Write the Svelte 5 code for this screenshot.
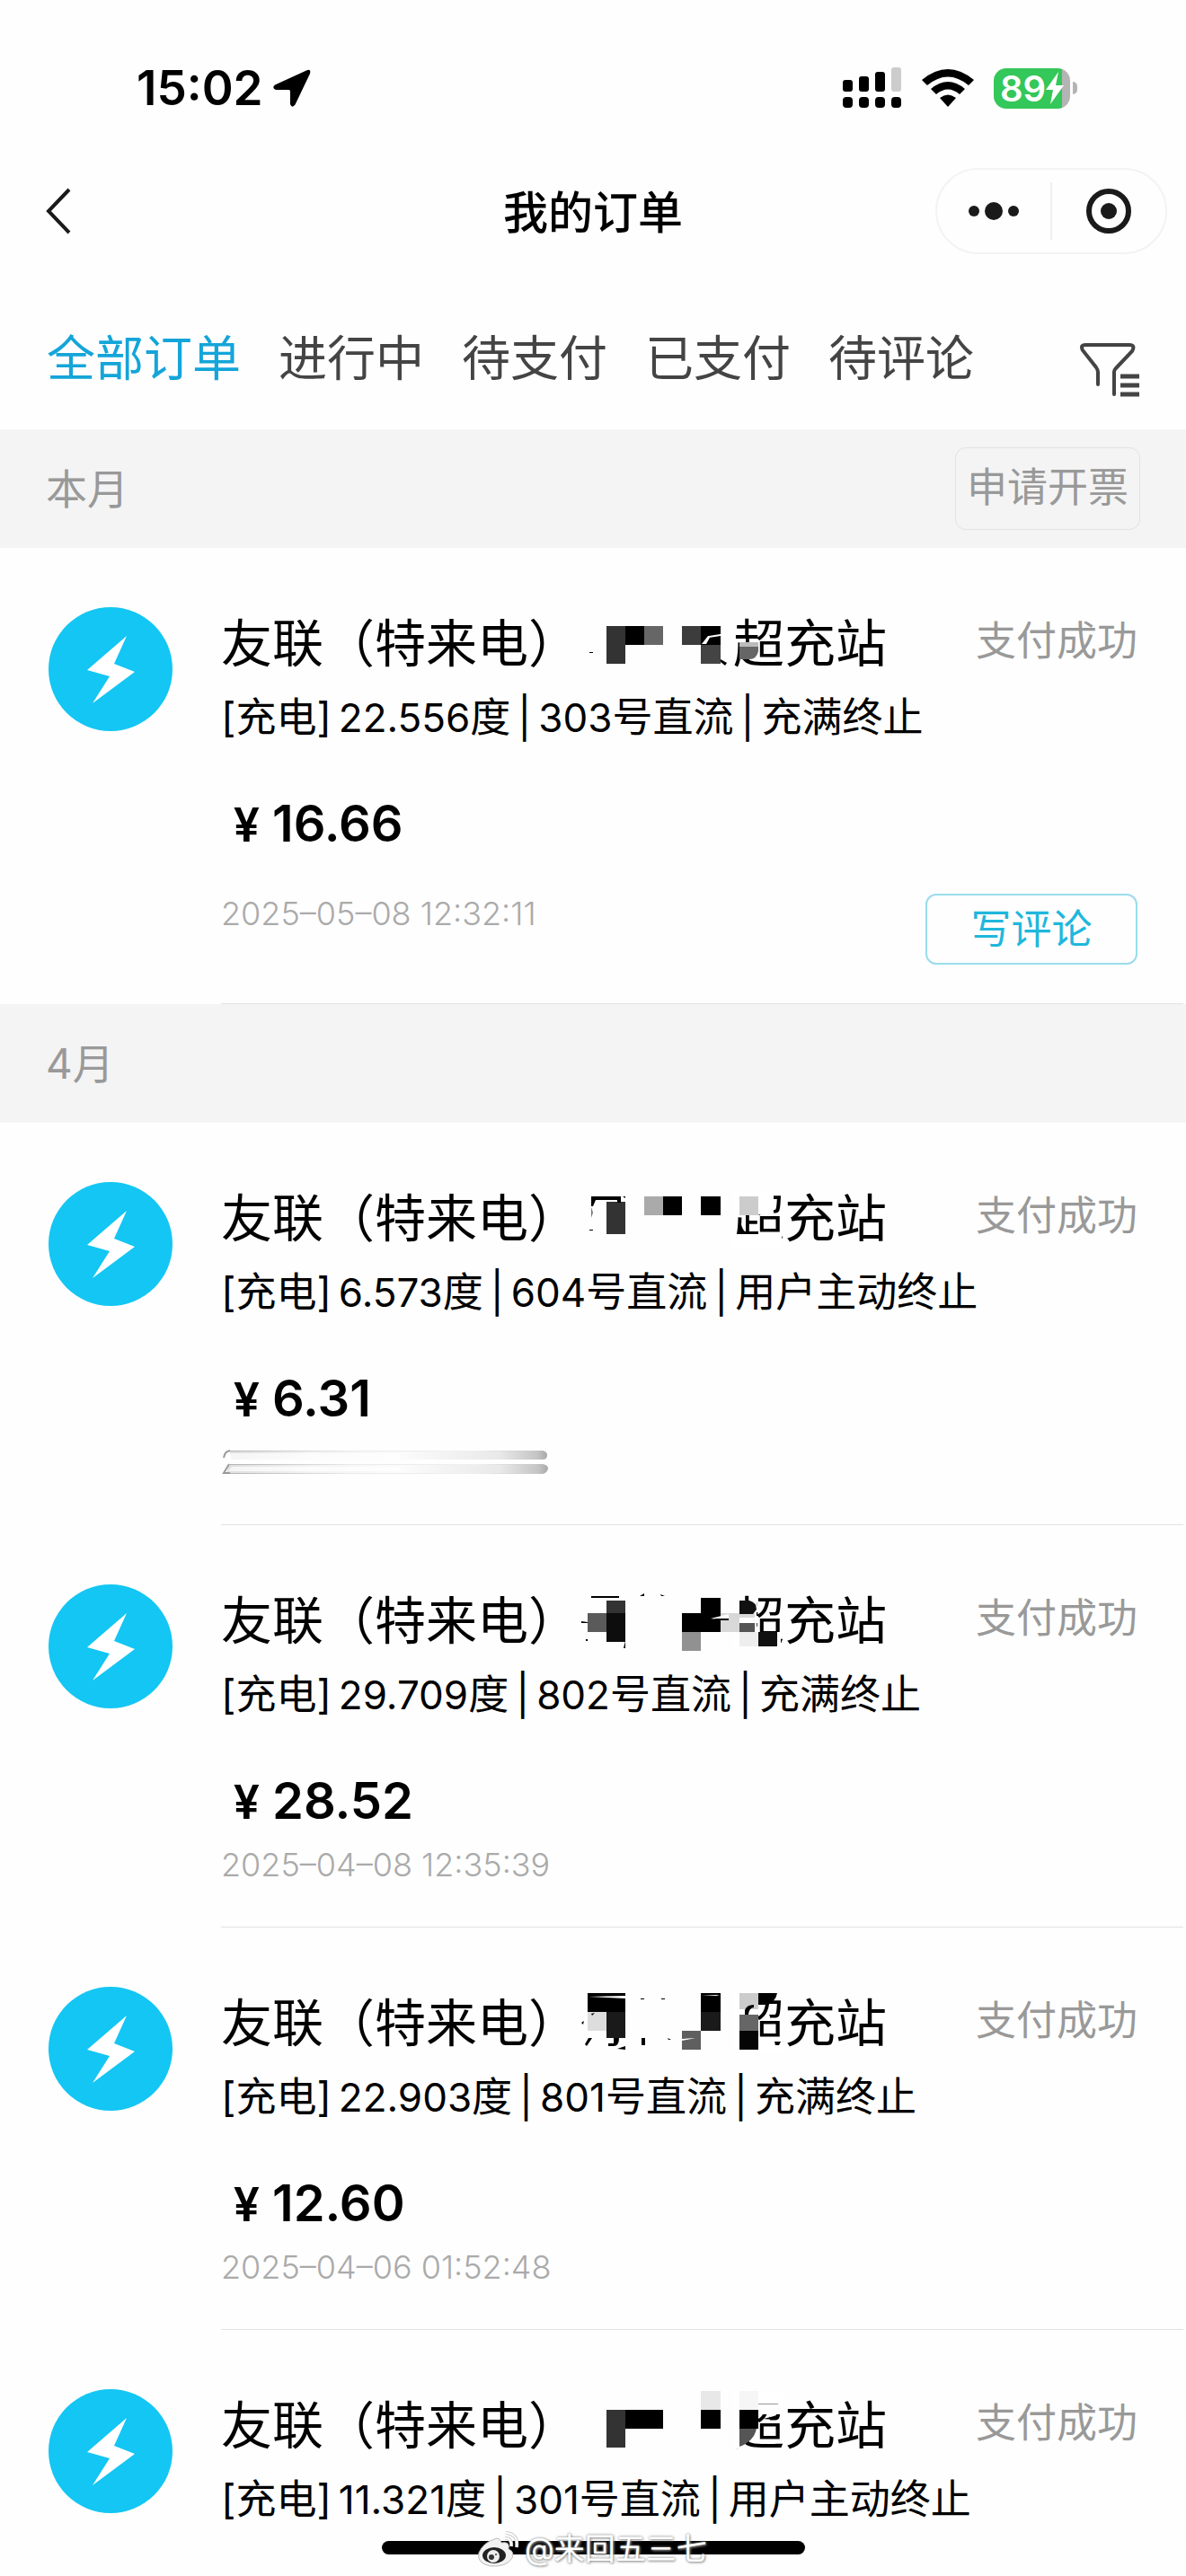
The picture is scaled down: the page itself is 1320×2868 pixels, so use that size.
<script>
  const tabs = ['全部订单', '进行中', '待支付', '已支付', '待评论'];
  let activeTab = $state('全部订单');

  // Mosaic tiles are [x, y, width, height, fill]; ink holds the loose strokes around them.
  const groups = [
    {
      month: '本月',
      invoice: true,
      orders: [
        {
          energy: '22.556', pile: '303', reason: '充满终止', price: '16.66',
          date: '2025–05–08 12:32:11', review: true,
          tiles: [
            [676, 87, 21, 42, '#333'], [697, 87, 21, 21, '#000'], [718, 87, 21, 21, '#666'],
            [760, 87, 21, 21, '#3c3c3c'], [781, 87, 22, 21, '#000'], [781, 108, 22, 21, '#444']
          ],
          ink: [
            ['M657 116h4v1h-4z', '#000'], ['M803 124l7 4-2 3-5-4z', '#000'],
            ['M824 105h21v10q-2 9-10 9h-11z', '#666'], ['M824 105h21v5h-21z', '#bbb'],
            ['M782 107l7-9h3l-5 9zM790 98l13-2v2l-13 2z', '#fff']
          ]
        }
      ]
    },
    {
      month: '4月',
      invoice: false,
      orders: [
        {
          energy: '6.573', pile: '604', reason: '用户主动终止', price: '6.31', smudged: true,
          tiles: [
            [818, 76, 27, 27, '#fff'], [845, 76, 17, 26, '#fff'], [816, 124, 55, 14, '#fff'],
            [676, 88, 21, 36, '#333'], [718, 82, 21, 21, '#aaa'], [739, 82, 21, 21, '#000'],
            [781, 82, 22, 21, '#000'], [824, 82, 21, 21, '#ccc']
          ],
          ink: [
            ['M659 82h33v7h-4v-3h-24l-3 7h-2z', '#000'], ['M659 94l2 6-2 6z', '#777'],
            ['M657 119h4v1h-4z', '#000'], ['M694 82h3v2z', '#000'],
            ['M824 121h21v3h-21z', '#000']
          ]
        },
        {
          energy: '29.709', pile: '802', reason: '充满终止', price: '28.52',
          date: '2025–04–08 12:35:39',
          tiles: [
            [818, 84, 25, 54, '#fff'], [842, 119, 28, 19, '#fff'],
            [655, 98, 21, 21, '#5a5a5a'], [676, 84, 21, 14, '#333'], [676, 98, 21, 32, '#0d0d0d'],
            [781, 81, 22, 17, '#000'], [760, 98, 43, 21, '#000'], [760, 119, 21, 21, '#919191'],
            [803, 98, 21, 21, '#d8d8d8'], [824, 98, 17, 5, '#d8d8d8'],
            [824, 109, 17, 10, '#555'], [824, 119, 21, 16, '#eee'], [845, 119, 21, 16, '#111']
          ],
          ink: [
            ['M659 79h31v2h-31z', '#000'], ['M648 107l7 1v1h-7z', '#000'],
            ['M697 129v8h-2z', '#000'], ['M713 79l5-3v3zM736 77l5 2h-4z', '#000'],
            ['M653 127h2v2h-2z', '#000'],
            ['M824 84h11q8 2 8 10l-4 5h-15z', '#111'],
            ['M792 104l20-5v7z', '#fff'], ['M796 104h16v2h-13z', '#000']
          ]
        },
        {
          energy: '22.903', pile: '801', reason: '充满终止', price: '12.60',
          date: '2025–04–06 01:52:48',
          tiles: [
            [818, 73, 27, 65, '#fff'], [845, 123, 27, 14, '#fff'],
            [655, 73, 42, 21, '#000'], [655, 94, 21, 21, '#ddd'], [676, 94, 21, 29, '#1a1a1a'],
            [781, 73, 22, 21, '#000'], [781, 94, 22, 21, '#1a1a1a'], [760, 115, 21, 21, '#5f5f5f'],
            [824, 73, 21, 18, '#ccc'], [824, 97, 21, 18, '#666'], [824, 115, 21, 21, '#050505']
          ],
          ink: [
            ['M656 77l41-1v3z', '#fff'], ['M782 75l20 0-4 1z', '#fff'],
            ['M648 106l3-2-1 4zM659 96l4-1-3 3z', '#000'],
            ['M656 123h4l-6 9-2-2z', '#000'], ['M684 123h6q0 9-6 9h-6v-3h6z', '#000'],
            ['M688 135l9-3v4z', '#000'], ['M715 123h4v8h-4z', '#000'],
            ['M714 79h4v1h-4zM737 79h4v1h-4zM744 123l4 2h-3z', '#000'],
            ['M760 124l15-1-15 3z', '#fff'],
            ['M845 73h21q-2 11-13 13h-8z', '#000'],
            ['M830 97v-5q2-6 10-6v3q-5 0-6 8z', '#000'],
            ['M863 127h7l-2 4h-4z', '#000']
          ]
        },
        {
          energy: '11.321', pile: '301', reason: '用户主动终止',
          tiles: [
            [818, 68, 27, 56, '#fff'], [845, 68, 27, 26, '#fff'],
            [676, 89, 21, 42, '#333'], [697, 89, 42, 21, '#000'], [781, 68, 22, 21, '#e8e8e8'],
            [781, 89, 22, 21, '#000'], [824, 68, 21, 21, '#f6f6f6'], [824, 89, 21, 21, '#000']
          ],
          ink: [
            ['M818 110h8v22h-8z', '#fff'],
            ['M824 110h19q-3 14-19 20z', '#555'], ['M845 82h22v1h-22z', '#999'],
            ['M850 99q10-2 15-4l-2 5z', '#000']
          ]
        }
      ]
    }
  ];
</script>

<div class="screen">
  <header class="status-bar">
    <div class="clock">
      <span>15:02</span>
      <svg width="44" height="44" viewBox="0 0 44 44" aria-hidden="true">
        <path d="M38 2.500Q43.500 0 42 6L25.500 40.500Q22 45 20 40V25.500Q20 24 18.500 24H4Q-1 22 3 18.500Z" />
      </svg>
    </div>
    <div class="indicators">
      <svg width="66" height="46" viewBox="0 0 66 46" aria-hidden="true">
        <rect x="0" y="14" width="11" height="13" rx="3" />
        <rect x="18" y="10" width="11" height="17" rx="3" />
        <rect x="36" y="5" width="11" height="22" rx="3" />
        <rect x="54" y="0" width="11" height="27" rx="3" fill="#ccc" />
        <rect x="0" y="33" width="11" height="12" rx="4" />
        <rect x="18" y="33" width="11" height="12" rx="4" />
        <rect x="36" y="33" width="11" height="12" rx="4" />
        <rect x="54" y="33" width="11" height="12" rx="4" />
      </svg>
      <svg width="58" height="44" viewBox="0 0 58 44" aria-hidden="true">
        <path d="M0 13Q29-11 58 13L52 19Q29 0 6 19Z" />
        <path d="M10 23Q29 7 48 23L42 29Q29 18 16 29Z" />
        <path d="M20 33Q29 26 38 33L29 43Z" />
      </svg>
      <div class="battery">
        <div class="cell">
          <span>89</span>
          <svg width="20" height="36" viewBox="0 0 20 36" aria-hidden="true">
            <path d="M14 0L0 20H8L5 36L20 15H11Z" fill="#fff" />
          </svg>
        </div>
        <i class="tip"></i>
      </div>
    </div>
  </header>

  <nav class="title-bar">
    <button class="back" aria-label="返回">
      <svg width="30" height="52" viewBox="0 0 30 52" aria-hidden="true">
        <path d="M27 2L4 26L27 50" fill="none" stroke="#1a1a1a" stroke-width="4" />
      </svg>
    </button>
    <h1>我的订单</h1>
    <div class="capsule">
      <button aria-label="更多">
        <svg width="58" height="22" viewBox="0 0 58 22" aria-hidden="true">
          <circle cx="7" cy="11" r="6" /><circle cx="29" cy="11" r="10" /><circle cx="51" cy="11" r="6" />
        </svg>
      </button>
      <button aria-label="关闭">
        <svg width="52" height="52" viewBox="0 0 52 52" aria-hidden="true">
          <circle cx="26" cy="26" r="22" fill="none" stroke="#1a1a1a" stroke-width="6" />
          <circle cx="26" cy="26" r="9" />
        </svg>
      </button>
    </div>
  </nav>

  <div class="tab-bar">
    {#each tabs as tab}
      <button class="tab" class:active={tab === activeTab} onclick={() => (activeTab = tab)}>{tab}</button>
    {/each}
    <button class="filter" aria-label="筛选">
      <svg width="68" height="62" viewBox="0 0 68 62" fill="none" stroke="#444" stroke-width="4" stroke-linecap="round" aria-hidden="true">
        <path d="M21 47V33Q21 31 19 28L4 9Q1 3 7 3H56Q63 3 59 10L41 29Q39 31 39 33V58" />
        <path d="M46 38H67M46 48H67M46 58H67" stroke-width="5" stroke-linecap="butt" />
      </svg>
    </button>
  </div>

  <main>
    {#each groups as group}
      <section>
        <div class="month">
          <h2>{group.month}</h2>
          {#if group.invoice}<button class="invoice">申请开票</button>{/if}
        </div>
        {#each group.orders as order}
          <article class="order">
            <svg class="avatar" width="138" height="138" viewBox="0 0 138 138" aria-hidden="true">
              <circle cx="69" cy="69" r="69" fill="#13c6f3" />
              <path d="M87 32L73 63L96 72L49 107L68 77L43 70Z" fill="#fff" />
            </svg>
            <div class="body">
              <div class="head">
                <h3>
                  友联（特来电）<span class="masked"></span>超充站
                  <svg class="mosaic" width="240" height="80" viewBox="646 63 240 80" aria-hidden="true">
                    {#each order.tiles as [x, y, w, h, fill]}
                      <rect {x} {y} width={w} height={h} {fill} />
                    {/each}
                    {#each order.ink as [d, fill]}
                      <path {d} {fill} />
                    {/each}
                  </svg>
                </h3>
                <span class="state">支付成功</span>
              </div>
              <p class="detail">[充电]<span class="num energy">{order.energy}</span>度<span class="bar">|</span><span class="num">{order.pile}</span>号直流<span class="bar">|</span>{order.reason}</p>
              {#if order.price}
                <p class="price"><span class="yen">¥</span>{order.price}</p>
                <div class="foot" class:tall={order.review}>
                  {#if order.smudged}
                    <svg width="366" height="44" viewBox="0 0 366 30" aria-hidden="true">
                      <defs>
                        <linearGradient id="streak">
                          <stop offset="0" stop-color="#dedede" />
                          <stop offset="0.25" stop-color="#f3f3f3" />
                          <stop offset="0.55" stop-color="#fbfbfb" />
                          <stop offset="0.85" stop-color="#e9e9e9" />
                          <stop offset="0.97" stop-color="#c4c4c4" />
                          <stop offset="1" stop-color="#a8a8a8" />
                        </linearGradient>
                        <linearGradient id="edge">
                          <stop offset="0" stop-color="#b4b4b4" />
                          <stop offset="0.4" stop-color="#eaeaea" />
                          <stop offset="0.8" stop-color="#f0f0f0" />
                          <stop offset="1" stop-color="#c8c8c8" />
                        </linearGradient>
                      </defs>
                      <path d="M9 2H358Q363 3 363 7Q363 12 358 12H12Z" fill="url(#streak)" />
                      <path d="M9 17H358Q364 18 364 22Q363 27 358 28H6Z" fill="url(#streak)" />
                      <path d="M8 2h342v1H8zM10 17h340v1H10zM8 27h342v1H8z" fill="url(#edge)" />
                      <path d="M8 5H200V12H6ZM12 20H200V25H8Z" fill="#fff" fill-opacity="0.700" />
                      <path d="M3 10Q4 3 10 2M9 17L3 27H10" fill="none" stroke="#999" stroke-width="2" />
                    </svg>
                  {:else}
                    <time>{order.date}</time>
                  {/if}
                  {#if order.review}<button class="review">写评论</button>{/if}
                </div>
              {/if}
            </div>
          </article>
        {/each}
      </section>
    {/each}
  </main>

  <div class="home-bar"></div>
  <div class="watermark">
    <svg width="50" height="42" viewBox="0 0 50 42" aria-hidden="true">
      <path d="M20 10Q8 14 3 25Q0 37 16 40Q34 41 40 31Q43 24 36 21Q38 12 28 14Q26 7 20 10Z" fill="#f2f2f2" stroke="#bbb" />
      <ellipse cx="20" cy="28" rx="13" ry="9" fill="#222" />
      <circle cx="19" cy="29" r="7" fill="#eee" />
      <circle cx="17" cy="30" r="3" fill="#333" /><circle cx="22" cy="27" r="1" fill="#333" />
      <path d="M32 9Q40 9 39 18M33 3Q47 4 45 19" fill="none" stroke="#ccc" stroke-width="4" />
      <path d="M32 9Q40 9 39 18M33 3Q47 4 45 19" fill="none" stroke="#fff" stroke-width="2" />
    </svg>
    <span>@来回五三七</span>
  </div>
</div>

<style>
  :global(body) {
    background: #fefefe;
  }

  .screen {
    position: relative;
    display: flex;
    flex-direction: column;
    height: 100vh;
    overflow: hidden;
    background: #fefefe;
    color: #000;
    font-family: Inter, 'Noto Sans CJK SC', sans-serif;
  }

  h1, h2, h3, p {
    margin: 0;
    font-weight: 400;
  }

  button {
    padding: 0;
    border: 0;
    background: none;
    color: inherit;
    font: inherit;
    cursor: pointer;
  }

  svg {
    display: block;
    flex: none;
  }

  .status-bar {
    display: flex;
    align-items: center;
    justify-content: space-between;
    flex: none;
    height: 156px;
    padding: 40px 121px 0 152px;
    box-sizing: border-box;
  }

  .clock {
    display: flex;
    align-items: center;
    gap: 10px;
    font-size: 53px;
    line-height: 64px;
    font-weight: 600;
  }

  .indicators {
    display: flex;
    align-items: center;
    gap: 22px;
  }

  .battery {
    display: flex;
    align-items: center;
    gap: 3px;
  }

  .cell {
    display: flex;
    align-items: center;
    justify-content: center;
    width: 85px;
    height: 45px;
    border-radius: 14px;
    background: linear-gradient(90deg, #34c759 89%, #b4b4b4 89%);
    color: #fff;
    font-size: 40px;
    line-height: 45px;
    font-weight: 600;
  }

  .tip {
    width: 5px;
    height: 14px;
    border-radius: 0 7px 7px 0;
    background: #b4b4b4;
  }

  .title-bar {
    display: grid;
    grid-template-columns: 1fr auto 1fr;
    align-items: center;
    flex: none;
    height: 158px;
    padding: 0 21px;
  }

  .back {
    justify-self: start;
    margin-left: 29px;
  }

  h1 {
    padding-top: 4px;
    font-size: 50px;
    line-height: 72px;
    font-weight: 500;
  }

  .capsule {
    display: flex;
    justify-self: end;
    width: 258px;
    height: 96px;
    box-sizing: border-box;
    border: 2px solid #f3f3f3;
    border-radius: 48px;
    fill: #1a1a1a;
  }

  .capsule button {
    display: flex;
    flex: 1;
    align-items: center;
    justify-content: center;
  }

  .capsule button + button {
    border-left: 2px solid #f0f0f0;
    margin: 14px 0;
  }

  .tab-bar {
    display: flex;
    align-items: center;
    flex: none;
    gap: 42px;
    height: 164px;
    padding: 0 51px 0 52px;
  }

  .tab {
    padding-top: 8px;
    font-size: 54px;
    line-height: 80px;
    color: #444;
    white-space: nowrap;
  }

  .tab.active {
    color: #14a5d9;
  }

  .filter {
    margin-left: auto;
    padding-top: 32px;
  }

  main {
    flex: 1;
    min-height: 0;
    overflow: hidden;
  }

  .month {
    display: flex;
    align-items: center;
    justify-content: space-between;
    height: 132px;
    padding: 0 51px;
    background: #f4f4f4;
    color: #999;
  }

  h2 {
    font-size: 46px;
    line-height: 64px;
  }

  .invoice {
    width: 206px;
    height: 92px;
    padding-bottom: 2px;
    box-sizing: border-box;
    border: 1px solid #e2e2e2;
    border-radius: 12px;
    font-size: 45px;
    line-height: 64px;
  }

  .order {
    display: flex;
    align-items: flex-start;
    gap: 54px;
    padding-left: 54px;
  }

  .avatar {
    margin-top: 66px;
  }

  .body {
    flex: 1;
    min-width: 0;
    min-height: 448px;
    box-sizing: border-box;
    margin-right: 3px;
    padding: 74px 51px 0 0;
    border-bottom: 1px solid #e2e2e2;
  }

  .head {
    display: flex;
    justify-content: space-between;
    align-items: flex-start;
    height: 64px;
  }

  h3 {
    position: relative;
    display: flex;
    font-size: 57px;
    line-height: 66px;
    white-space: nowrap;
  }

  .masked {
    width: 3em;
  }

  .mosaic {
    position: absolute;
    left: 7em;
    top: -11px;
  }

  .state {
    font-size: 45px;
    line-height: 60px;
    color: #999;
    white-space: nowrap;
  }

  .detail {
    height: 64px;
    padding-top: 19px;
    font-size: 45px;
    line-height: 64px;
    white-space: nowrap;
  }

  .num {
    font-size: 44px;
    line-height: 1;
  }

  .energy {
    margin-left: 8px;
  }

  .bar {
    margin: 0 8px;
  }

  .price {
    height: 72px;
    padding-top: 50px;
    font-size: 56px;
    line-height: 72px;
    font-weight: 600;
  }

  .yen {
    display: inline-block;
    width: 57px;
    text-align: center;
    font-size: 52px;
    line-height: 1;
  }

  .foot {
    display: flex;
    justify-content: space-between;
    align-items: flex-start;
    padding-top: 13px;
  }

  .foot.tall {
    padding: 42px 0 43px;
  }

  time {
    font-size: 36px;
    line-height: 44px;
    color: #aaa;
    font-weight: 300;
  }

  .review {
    width: 236px;
    height: 79px;
    box-sizing: border-box;
    border: 2px solid #9adcec;
    border-radius: 12px;
    font-size: 45px;
    line-height: 64px;
    color: #1fb7dc;
  }

  .home-bar {
    position: absolute;
    left: 50%;
    bottom: 24px;
    width: 471px;
    height: 15px;
    margin-left: -235px;
    border-radius: 8px;
    background: #000;
  }

  .watermark {
    position: absolute;
    left: 530px;
    bottom: 8px;
    display: flex;
    align-items: center;
    gap: 4px;
    color: #fff;
    font-size: 34px;
    line-height: 44px;
    text-shadow: 0 0 3px #888, 1px 1px 3px #999;
  }
</style>
